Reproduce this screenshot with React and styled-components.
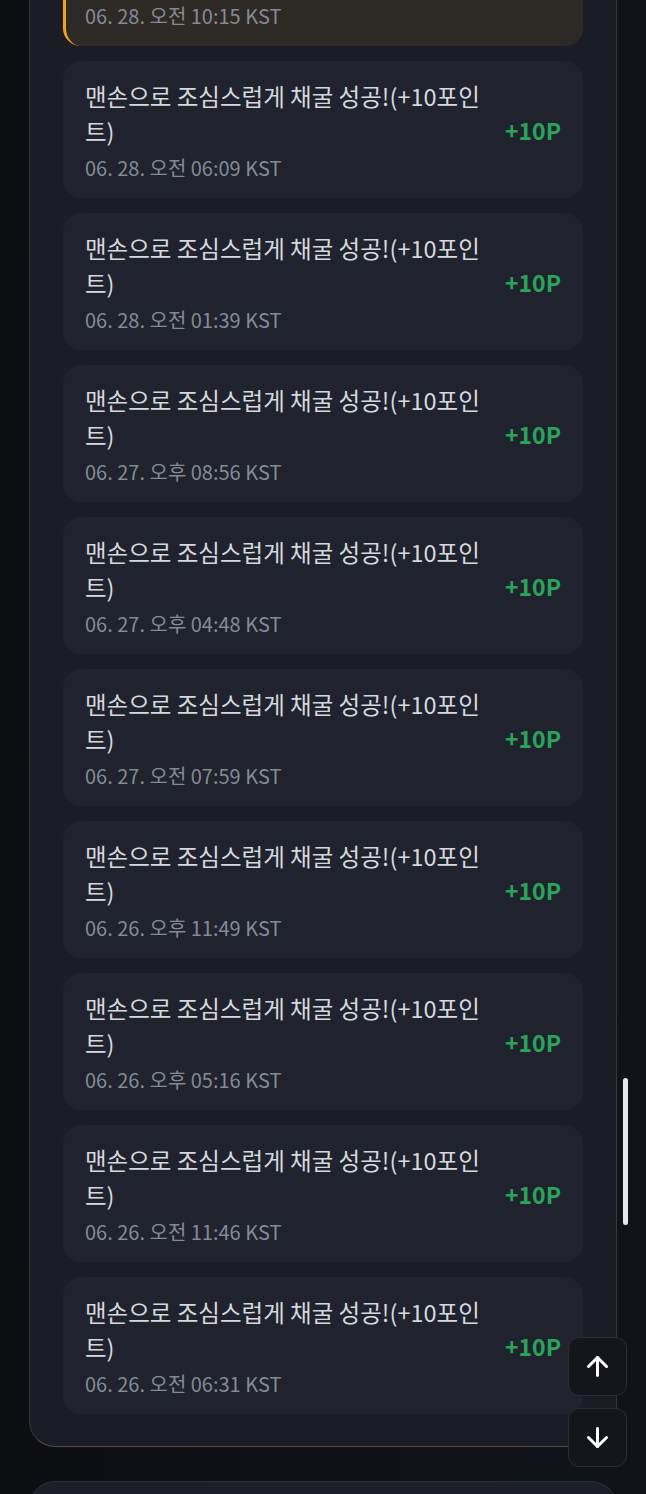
import { ArrowUp, ArrowDown } from "lucide-react";
import styled, { createGlobalStyle } from "styled-components";

const GlobalStyle = createGlobalStyle`
  html, body {
    margin: 0;
    padding: 0;
    background: #0d0f13;
    font-family: "Noto Sans CJK KR", "Noto Sans", sans-serif;
  }
`;

const Page = styled.div`
  min-height: 1494px;
  background: linear-gradient(90deg, #0c0e12 0%, #0f1116 50%, #10131a 100%);
  padding: 0 29px;
  margin-top: -124px;
  overflow: hidden;
`;

const Panel = styled.section`
  background: #1a1d25;
  border: 1px solid #3b3733;
  border-bottom-color: #5a4b3a;
  border-radius: 0 0 26px 26px;
  padding: 32px 33px;
  display: flex;
  flex-direction: column;
  gap: 15px;
`;

const NextPanel = styled.section`
  margin-top: 34px;
  height: 120px;
  background: #1c1f28;
  border: 1px solid #2c303b;
  border-radius: 26px 26px 0 0;
`;

const Card = styled.div`
  display: flex;
  align-items: center;
  gap: 16px;
  min-height: 137px;
  box-sizing: border-box;
  padding: 18px 22px 17px ${(p) => (p.$active ? "19px" : "22px")};
  border-radius: 18px;
  background: ${(p) => (p.$active ? "#2d2a25" : "#20232d")};
  border-left: ${(p) => (p.$active ? "3px solid #f0a21e" : "none")};
`;

const Body = styled.div`
  flex: 1;
  min-width: 0;
`;

const Title = styled.div`
  font-size: 23.5px;
  line-height: 35px;
  color: #d5d8df;
`;

const Time = styled.div`
  margin-top: 6px;
  font-size: 20px;
  line-height: 26px;
  color: #858a96;
`;

const Points = styled.div`
  flex-shrink: 0;
  font-size: 23px;
  font-weight: 700;
  color: #28a55a;
`;

const Scrollbar = styled.div`
  position: fixed;
  right: 18px;
  top: 1078px;
  width: 5px;
  height: 147px;
  border-radius: 3px;
  background: #e8e9ec;
`;

const FloatStack = styled.div`
  position: fixed;
  right: 19px;
  bottom: 27px;
  display: flex;
  flex-direction: column;
  gap: 12px;
`;

const FloatButton = styled.button`
  width: 59px;
  height: 59px;
  display: flex;
  align-items: center;
  justify-content: center;
  background: #14161c;
  border: 1px solid #2b2e36;
  border-radius: 11px;
  color: #ffffff;
  padding: 0;
`;

const history = [
  { time: "06. 28. 오전 10:15 KST", active: true },
  { time: "06. 28. 오전 06:09 KST" },
  { time: "06. 28. 오전 01:39 KST" },
  { time: "06. 27. 오후 08:56 KST" },
  { time: "06. 27. 오후 04:48 KST" },
  { time: "06. 27. 오전 07:59 KST" },
  { time: "06. 26. 오후 11:49 KST" },
  { time: "06. 26. 오후 05:16 KST" },
  { time: "06. 26. 오전 11:46 KST" },
  { time: "06. 26. 오전 06:31 KST" },
];

export default function App() {
  return (
    <>
      <GlobalStyle />
      <Page>
        <Panel>
          {history.map((item) => (
            <Card key={item.time} $active={item.active}>
              <Body>
                <Title>맨손으로 조심스럽게 채굴 성공!(+10포인트)</Title>
                <Time>{item.time}</Time>
              </Body>
              <Points>+10P</Points>
            </Card>
          ))}
        </Panel>
        <NextPanel />
      </Page>
      <Scrollbar />
      <FloatStack>
        <FloatButton aria-label="위로">
          <ArrowUp size={31} strokeWidth={2.3} />
        </FloatButton>
        <FloatButton aria-label="아래로">
          <ArrowDown size={31} strokeWidth={2.3} />
        </FloatButton>
      </FloatStack>
    </>
  );
}
